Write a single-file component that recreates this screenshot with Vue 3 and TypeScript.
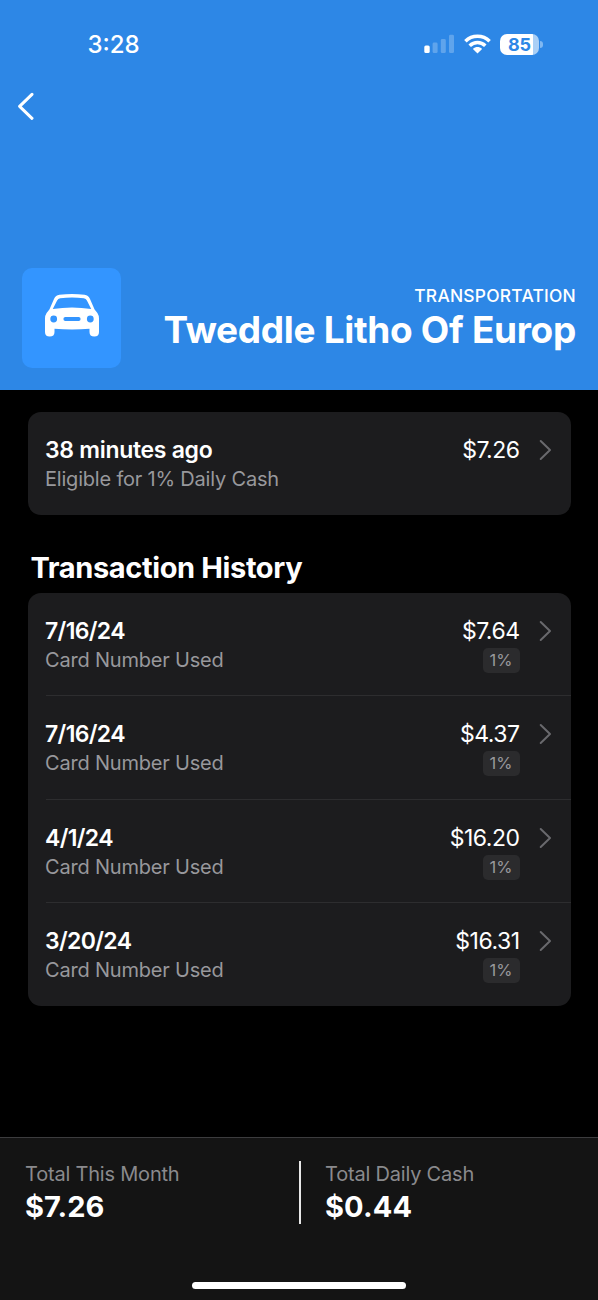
<script setup lang="ts">
interface Transaction {
  date: string
  detail: string
  amount: string
  reward: string
}

const transactions: Transaction[] = [
  { date: '7/16/24', detail: 'Card Number Used', amount: '$7.64', reward: '1%' },
  { date: '7/16/24', detail: 'Card Number Used', amount: '$4.37', reward: '1%' },
  { date: '4/1/24', detail: 'Card Number Used', amount: '$16.20', reward: '1%' },
  { date: '3/20/24', detail: 'Card Number Used', amount: '$16.31', reward: '1%' },
]
</script>

<template>
  <div class="screen">
    <header class="hero">
      <div class="status">
        <span class="time">3:28</span>
        <div class="indicators">
          <svg class="signal" width="31" height="20" viewBox="0 0 31 20">
            <rect x="0.3" y="11.5" width="5.4" height="7.6" rx="1.6" fill="#fff" />
            <g fill="#fff" opacity="0.24">
              <rect x="8.6" y="8.6" width="5" height="10.5" rx="1.4" />
              <rect x="16.8" y="5" width="5" height="14.1" rx="1.4" />
              <rect x="25" y="0.8" width="5" height="18.3" rx="1.4" />
            </g>
          </svg>
          <svg class="wifi" width="27" height="20" viewBox="0 0 27 20">
            <g fill="none" stroke="#fff" stroke-width="3.6">
              <path d="M1.4 7.2C8.2 0.6 18.8 0.6 25.6 7.2" />
              <path d="M5.7 11.7C10.2 7.5 16.8 7.5 21.3 11.7" />
            </g>
            <path d="M8.9 14.9C11.6 12.5 15.4 12.5 18.1 14.9L13.5 19.6Z" fill="#fff" />
          </svg>
          <div class="battery">
            <div class="cell">85</div>
            <i class="cap"></i>
          </div>
        </div>
      </div>
      <svg class="back" width="17" height="28" viewBox="0 0 17 28">
        <path d="M15 2.3L2.6 14.3L15 26.3" fill="none" stroke="#fff" stroke-width="3" stroke-linecap="round" stroke-linejoin="round" />
      </svg>
      <div class="merchant">
        <div class="tile">
          <svg width="54" height="43" viewBox="0 0 54 43">
            <path
              fill="#fff"
              fill-rule="evenodd"
              d="M14.4 .8Q27-.6 39.6 .8Q43.4 1.4 44.9 4.8L49.6 15.6L52.4 19Q54 21.4 54 24.5V38Q54 42.5 49.3 42.5Q44.5 42.5 44.5 38V34.8Q27 36.4 9.5 34.8V38Q9.5 42.5 4.7 42.5Q0 42.5 0 38V24.5Q0 21.4 1.6 19L4.4 15.6L9.1 4.8Q10.6 1.4 14.4 .8ZM15.2 4.2Q13 4.5 12.1 6.5L7.8 14.9Q27 11.9 46.2 14.9L41.9 6.5Q41 4.5 38.8 4.2Q27 3 15.2 4.2ZM8.7 21.6A3.4 3.4 0 1 0 8.7 28.4A3.4 3.4 0 1 0 8.7 21.6ZM45.3 21.6A3.4 3.4 0 1 0 45.3 28.4A3.4 3.4 0 1 0 45.3 21.6ZM20.4 23A2 2 0 0 0 20.4 27H33.6A2 2 0 0 0 33.6 23Z"
            />
          </svg>
        </div>
        <div class="names">
          <span class="category">TRANSPORTATION</span>
          <h1>Tweddle Litho Of Europ</h1>
        </div>
      </div>
    </header>

    <main>
      <section class="card">
        <div class="row">
          <div class="info">
            <span class="headline recent">38 minutes ago</span>
            <span class="detail">Eligible for 1% Daily Cash</span>
          </div>
          <div class="value"><span class="amount">$7.26</span></div>
          <svg class="chevron" width="13" height="22" viewBox="0 0 13 22">
            <path d="M1.7 2L11 11L1.7 20" />
          </svg>
        </div>
      </section>

      <h2>Transaction History</h2>
      <section class="card history">
        <div v-for="(item, index) in transactions" :key="index" class="row">
          <div class="info">
            <span class="headline">{{ item.date }}</span>
            <span class="detail">{{ item.detail }}</span>
          </div>
          <div class="value">
            <span class="amount">{{ item.amount }}</span>
            <span class="reward">{{ item.reward }}</span>
          </div>
          <svg class="chevron" width="13" height="22" viewBox="0 0 13 22">
            <path d="M1.7 2L11 11L1.7 20" />
          </svg>
        </div>
      </section>
    </main>

    <footer>
      <div class="totals">
        <div class="total">
          <span class="label">Total This Month</span>
          <strong>$7.26</strong>
        </div>
        <div class="total second">
          <span class="label">Total Daily Cash</span>
          <strong>$0.44</strong>
        </div>
      </div>
      <div class="home"></div>
    </footer>
  </div>
</template>

<style>
body {
  background: #000;
}
</style>

<style scoped>
.screen {
  width: 598px;
  height: 1300px;
  display: flex;
  flex-direction: column;
  overflow: hidden;
  background: #000;
  color: #fff;
  font-family: Inter, "Liberation Sans", sans-serif;
  box-sizing: border-box;
}
.screen * {
  box-sizing: border-box;
}
.hero {
  height: 390px;
  flex: none;
  display: flex;
  flex-direction: column;
  background: #2d87e6;
}
.status {
  display: flex;
  justify-content: space-between;
  padding: 30px 55px 0 87.5px;
  height: 92px;
}
.time {
  font-size: 24px;
  line-height: 29px;
  font-weight: 500;
}
.indicators {
  display: flex;
  align-items: flex-start;
  padding-top: 4px;
}
.wifi {
  margin: 0 9px 0 9px;
}
.battery {
  display: flex;
  align-items: center;
  gap: 1px;
}
.cell {
  width: 39px;
  height: 21px;
  border-radius: 7px;
  background: linear-gradient(90deg, #fff 33px, #a9cff6 33px);
  color: #2d87e6;
  font-size: 18px;
  line-height: 21px;
  font-weight: 700;
  text-align: center;
}
.cap {
  width: 3px;
  height: 7px;
  border-radius: 0 4px 4px 0;
  background: #80b8f1;
}
.back {
  margin-left: 17px;
}
.merchant {
  display: flex;
  justify-content: space-between;
  margin-top: 148px;
  padding: 0 22px;
}
.tile {
  width: 99px;
  height: 100px;
  display: flex;
  align-items: center;
  justify-content: center;
  padding: 0 0 5px 0;
  border-radius: 10px;
  background: #3395ff;
}
.names {
  display: flex;
  flex-direction: column;
  align-items: flex-end;
  padding-top: 17px;
}
.category {
  font-size: 17.4px;
  line-height: 22px;
  font-weight: 500;
  letter-spacing: 0.24px;
}
h1 {
  margin: 0;
  font-size: 37px;
  line-height: 46px;
  font-weight: 700;
  letter-spacing: -0.32px;
  white-space: nowrap;
}
main {
  height: 747px;
  flex: none;
  padding: 22px 27.5px 0;
}
.card {
  border-radius: 13px;
  background: #1c1c1e;
}
.row {
  display: flex;
  height: 103.3px;
  padding: 24px 18px 0 17.5px;
  position: relative;
}
.row + .row::before {
  content: "";
  position: absolute;
  left: 18px;
  right: 0;
  top: -1px;
  height: 1px;
  background: #2d2d2f;
}
.info {
  display: flex;
  flex-direction: column;
  flex: 1;
}
.headline {
  font-size: 23px;
  line-height: 29px;
  font-weight: 600;
  letter-spacing: -0.65px;
}
.recent {
  letter-spacing: -0.3px;
}
.detail {
  font-size: 20px;
  line-height: 28px;
  letter-spacing: -0.2px;
  color: #98989c;
}
.value {
  display: flex;
  flex-direction: column;
  align-items: flex-end;
}
.amount {
  font-size: 23px;
  line-height: 29px;
  letter-spacing: -0.5px;
}
.reward {
  width: 37px;
  height: 25px;
  margin-top: 2px;
  border-radius: 5px;
  background: #2b2b2d;
  color: #98989c;
  font-size: 16.5px;
  line-height: 25px;
  text-align: center;
}
.chevron {
  margin: 3px 0.5px 0 19.5px;
}
.chevron path {
  fill: none;
  stroke: #69696d;
  stroke-width: 2;
  stroke-linecap: round;
  stroke-linejoin: round;
}
h2 {
  margin: 34.5px 0 7.2px 3px;
  font-size: 29px;
  line-height: 36px;
  font-weight: 700;
  letter-spacing: -0.38px;
}
footer {
  flex: 1;
  display: flex;
  flex-direction: column;
  align-items: center;
  border-top: 1px solid #3c3c3e;
  background: #141414;
}
.totals {
  display: flex;
  align-self: stretch;
  padding-top: 23px;
}
.total {
  width: 299px;
  height: 63px;
  display: flex;
  flex-direction: column;
  padding-left: 25px;
}
.second {
  padding-left: 24px;
  border-left: 2px solid #e8e8e8;
}
.label {
  font-size: 20px;
  line-height: 26px;
  letter-spacing: -0.2px;
  color: #8a8a8d;
}
strong {
  font-size: 29px;
  line-height: 39px;
  font-weight: 700;
  letter-spacing: 0.1px;
}
.home {
  width: 214px;
  height: 7px;
  margin-top: 58px;
  border-radius: 4px;
  background: #fff;
}
</style>
